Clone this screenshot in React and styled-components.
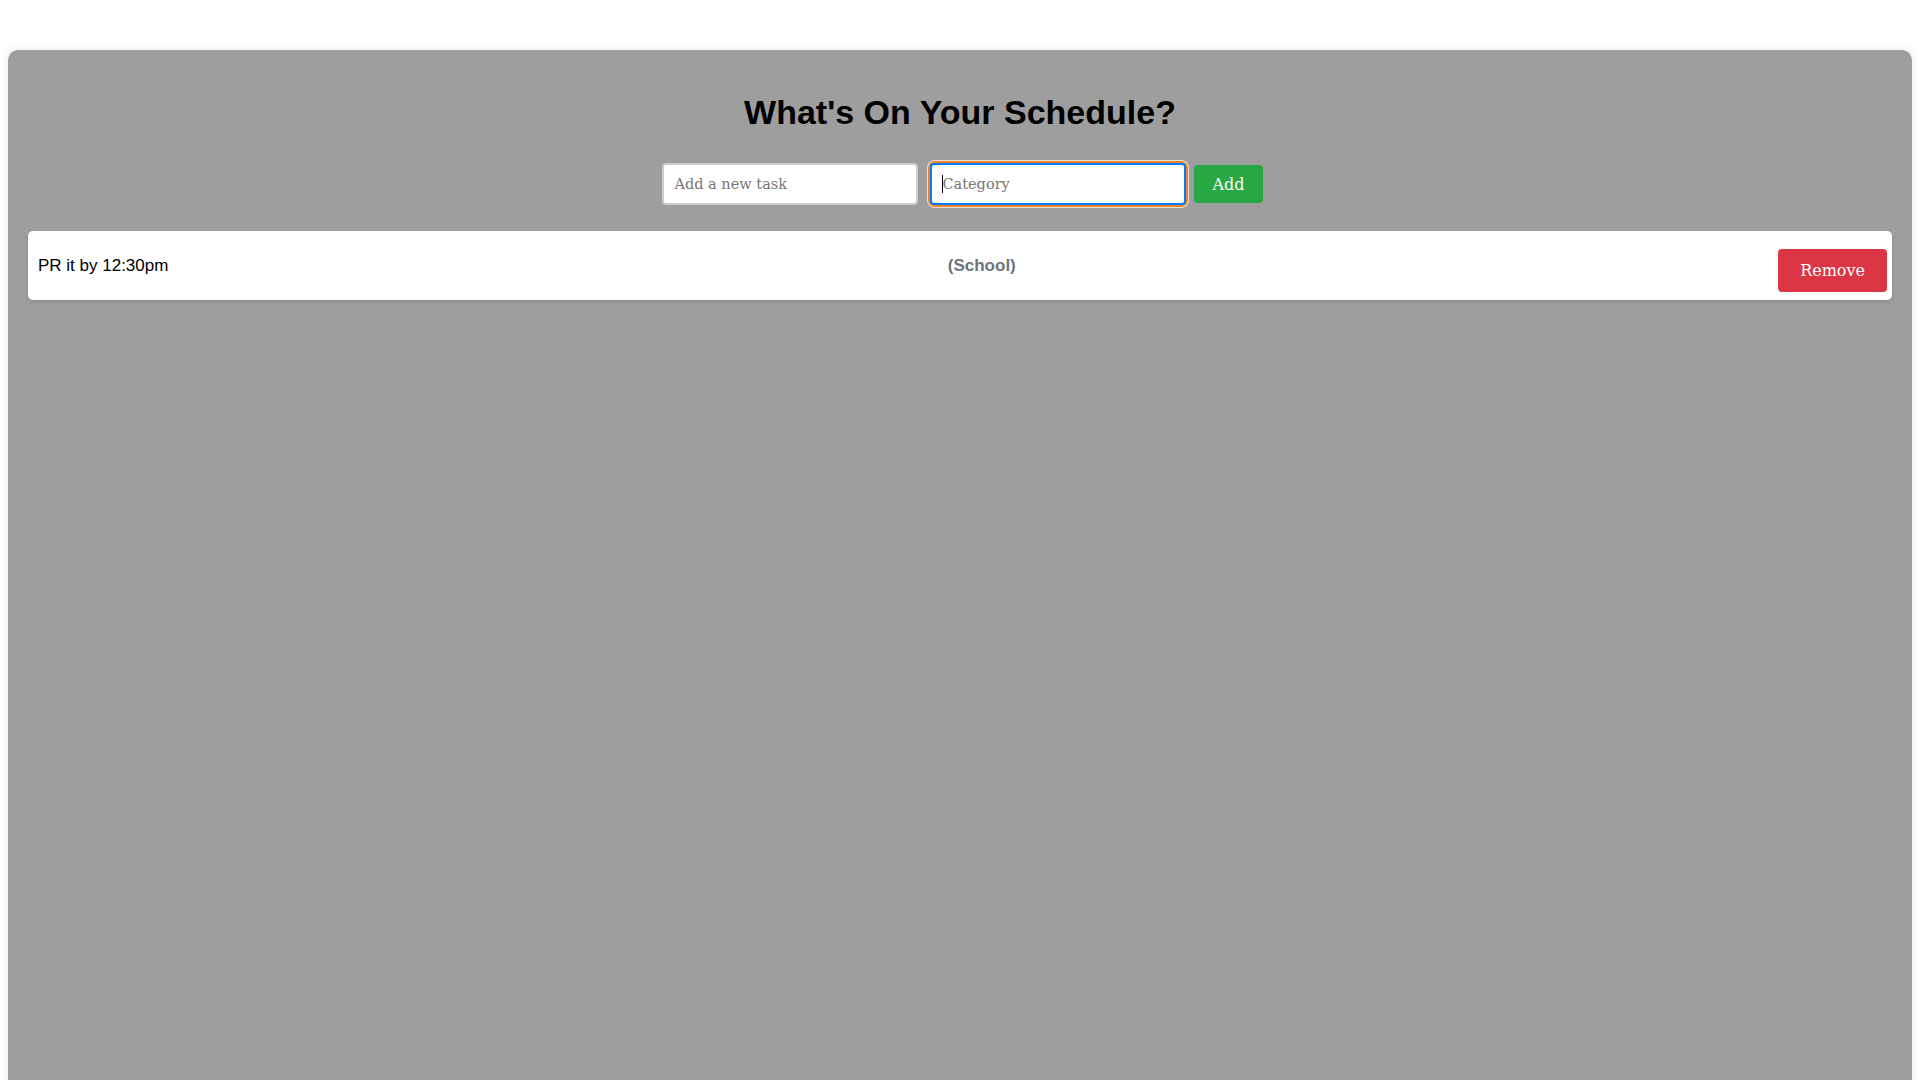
import React from "react";
import styled, { createGlobalStyle } from "styled-components";

const GlobalStyle = createGlobalStyle`
  html, body { margin: 0; padding: 0; background: #ffffff; }
  body { font-family: "DejaVu Serif", serif; overflow: hidden; }
`;

const Panel = styled.div`
  margin: 50px 8px 0;
  min-height: 1100px;
  background: #9e9e9e;
  border-radius: 10px;
  box-shadow: 0 0 10px rgba(0, 0, 0, 0.1);
  padding: 24px 20px;
  box-sizing: border-box;
`;

const Title = styled.h1`
  margin: 19px 0 31px;
  text-align: center;
  font-family: "Liberation Sans", Arial, sans-serif;
  font-size: 34px;
  font-weight: 700;
  color: #000;
`;

const Form = styled.div`
  display: flex;
  justify-content: center;
  align-items: center;
  padding-left: 5px;
  margin-bottom: 26px;
`;

const Field = styled.div`
  position: relative;
  margin-right: ${(p) => p.$gap}px;
  border-radius: 5px;
  box-shadow: ${(p) =>
    p.$focused ? "0 0 0 2px #f58220, 0 0 0 3px rgba(255,255,255,0.7)" : "none"};
`;

const Input = styled.input`
  display: block;
  width: 256px;
  height: 42px;
  box-sizing: border-box;
  padding: 0 10px;
  font-family: "DejaVu Serif", serif;
  font-size: 14.5px;
  border: 2px solid ${(p) => (p.$focused ? "#007bff" : "#cccccc")};
  border-radius: 4px;
  background: #fff;
  outline: none;
  &::placeholder { color: #777; }
`;

const Caret = styled.span`
  position: absolute;
  left: 12px;
  top: 50%;
  transform: translateY(-50%);
  width: 1px;
  height: 18px;
  background: #000;
`;

const Button = styled.button`
  font-family: "DejaVu Serif", serif;
  font-size: 16px;
  color: #fff;
  border: none;
  border-radius: 4px;
  cursor: pointer;
  background: ${(p) => p.$bg};
  padding: 0 ${(p) => p.$px}px;
  height: ${(p) => p.$h}px;
  margin-top: ${(p) => p.$mt || 0}px;
`;

const List = styled.ul`
  list-style: none;
  margin: 0;
  padding: 0;
`;

const Card = styled.li`
  display: flex;
  align-items: center;
  justify-content: space-between;
  background: #fff;
  border-radius: 5px;
  box-shadow: 0 2px 4px rgba(0, 0, 0, 0.12);
  padding: 8px 5px 8px 10px;
  font-family: "Liberation Sans", Arial, sans-serif;
  font-size: 17px;
  color: #000;
`;

const TaskText = styled.span``;

const Category = styled.span`
  margin-left: 17px;
  font-weight: 700;
  font-size: 17px;
  color: #6c757d;
`;

export default function App() {
  return (
    <>
      <GlobalStyle />
      <Panel>
        <Title>What's On Your Schedule?</Title>
        <Form>
          <Field $gap={12}>
            <Input placeholder="Add a new task" />
          </Field>
          <Field $gap={8} $focused>
            <Input placeholder="Category" $focused />
            <Caret />
          </Field>
          <Button $bg="#28a745" $px={18} $h={38}>Add</Button>
        </Form>
        <List>
          <Card>
            <TaskText>PR it by 12:30pm</TaskText>
            <Category>(School)</Category>
            <Button $bg="#dc3545" $px={22} $h={43} $mt={10}>Remove</Button>
          </Card>
        </List>
      </Panel>
    </>
  );
}
